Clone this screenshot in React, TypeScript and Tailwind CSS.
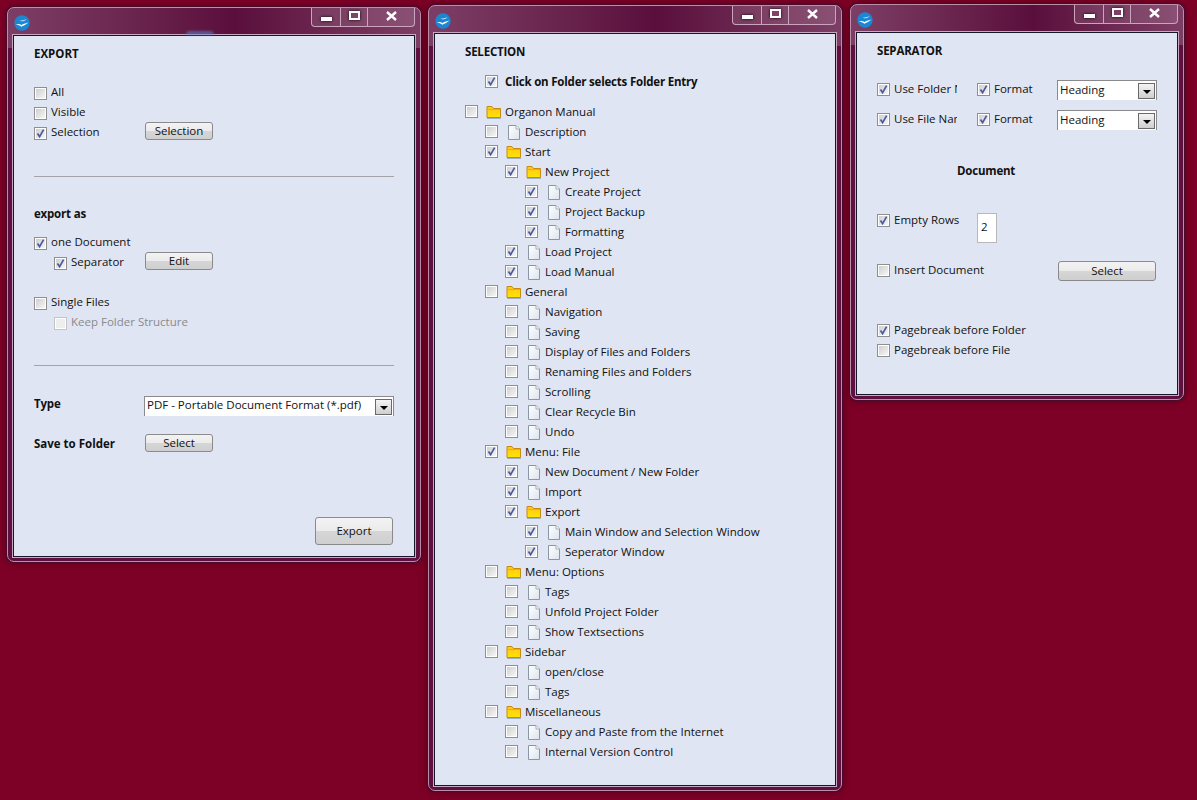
import React from "react";

const FONT = "font-['Open_Sans','Noto_Sans',sans-serif]";

function Check({ on, off, className = "" }: { on?: boolean; off?: boolean; className?: string }) {
  return (
    <span
      className={`relative block h-[13px] w-[13px] shrink-0 border ${
        off ? "border-[#c4c4c8]" : "border-[#8f8f90]"
      } bg-white p-px ${className}`}
    >
      <span
        className={`block h-full w-full ${
          off
            ? "bg-[#eeeeee]"
            : "bg-gradient-to-br from-[#cfcfd2] to-[#f6f6f6]"
        }`}
      />
      {on && (
        <svg className="absolute left-0 top-0" width="11" height="11" viewBox="0 0 11 11">
          <path d="M2.5 5.5 L4.6 8.6 L8.6 1.6" fill="none" stroke="#4a5a9c" strokeWidth="1.7" />
        </svg>
      )}
    </span>
  );
}

function Folder() {
  return (
    <svg width="16" height="14" viewBox="0 0 16 14" className="shrink-0">
      <defs>
        <linearGradient id="fg" x1="0" y1="0" x2="0" y2="1">
          <stop offset="0" stopColor="#ffc520" />
          <stop offset="1" stopColor="#ffe400" />
        </linearGradient>
      </defs>
      <path d="M1 12.5 V1.5 H6 L7.5 3.5 H14.5 V12.5 Z" fill="url(#fg)" stroke="#c98a14" />
      <path d="M1 13.5 H15" stroke="#9fb0c8" />
      <path d="M2 4.5 H14" stroke="#ffa800" />
    </svg>
  );
}

function Doc() {
  return (
    <svg width="16" height="15" viewBox="0 0 16 15" className="shrink-0">
      <defs>
        <linearGradient id="dg" x1="0" y1="0" x2="1" y2="1">
          <stop offset="0" stopColor="#ffffff" />
          <stop offset="1" stopColor="#dde4ee" />
        </linearGradient>
      </defs>
      <path d="M2.5 0.5 H10 L13.5 4 V14.5 H2.5 Z" fill="url(#dg)" stroke="#8a96a6" />
      <path d="M10 0.5 V4 H13.5" fill="#f4f6fa" stroke="#a4aeba" />
    </svg>
  );
}

function Logo() {
  return (
    <svg width="16" height="16" viewBox="0 0 16 16" className="shrink-0">
      <circle cx="8" cy="8" r="7.7" fill="#1b86d2" />
      <path d="M1.5 9.5 C4 8.5 6 9 7.5 10 C10 8.5 12 8.2 14.5 7.5 C12 9.5 10 10.5 7.5 11.8 C6 10.5 4 9.8 1.5 9.5 Z" fill="#ffffff" />
      <path d="M5 5.6 C7.5 5.8 10 5 12.5 4.2 C10.5 6.2 7.5 7 5 5.6 Z" fill="#d8ecfa" />
    </svg>
  );
}

function Caption() {
  return (
    <div className="flex h-[19px] w-[104px] rounded-b-[4px] border border-t-0 border-[#c9a6bc] bg-white/10">
      <div className="flex w-[29px] items-end justify-center border-r border-[#c9a6bc] pb-[5px]">
        <span className="block h-[4px] w-[11px] bg-white shadow-[0_0_3px_#000]" />
      </div>
      <div className="flex w-[27px] items-center justify-center border-r border-[#c9a6bc] pb-[3px]">
        <span className="block h-[9px] w-[11px] border-2 border-white shadow-[0_0_3px_#000]" />
      </div>
      <div className="flex flex-1 items-center justify-center pb-[3px]">
        <svg width="11" height="10" viewBox="0 0 11 10">
          <path d="M1 1 L10 9 M10 1 L1 9" stroke="#ffffff" strokeWidth="2.4" />
        </svg>
      </div>
    </div>
  );
}

function Win({
  x,
  y,
  w,
  h,
  children,
}: {
  x: string;
  y: string;
  w: string;
  h: string;
  children: React.ReactNode;
}) {
  return (
    <section
      className={`absolute ${x} ${y} ${w} ${h} flex flex-col rounded-[7px] border border-[#b98fa9] bg-[#5f0f40] bg-gradient-to-r from-[#7d3e66] via-[#5a0e3c] via-[55%] to-[#7d3e66] bg-[length:100%_40px] bg-no-repeat px-[5px] pb-[4px] shadow-[0_0_0_1px_#4a0a2c,0_0_8px_rgba(0,0,0,0.4)]`}
    >
      <div className="flex h-[27px] shrink-0 items-start justify-between">
        <div className="pl-[1px] pt-[7px]">
          <Logo />
        </div>
        <Caption />
      </div>
      <div className="relative flex-1 border border-[#16162a] bg-[#dfe5f3] text-[11.5px] leading-[20px] text-[#111] shadow-[0_0_0_1px_#c8a9c0]">
        {children}
      </div>
    </section>
  );
}

function Row({
  on,
  off,
  label,
  className = "",
  checkClass = "",
  children,
}: {
  on?: boolean;
  off?: boolean;
  label: string;
  className?: string;
  checkClass?: string;
  children?: React.ReactNode;
}) {
  return (
    <div className={`flex h-[20px] items-center ${className}`}>
      <Check on={on} off={off} className={checkClass} />
      <span className={`ml-[4px] whitespace-nowrap ${off ? "text-[#8a8a8a]" : ""}`}>{label}</span>
      {children}
    </div>
  );
}

function Btn({ label, className = "" }: { label: string; className?: string }) {
  return (
    <button
      className={`flex items-center justify-center rounded-[3px] border border-[#8a8a8a] bg-[linear-gradient(#f3f3f3_0%,#ebebeb_50%,#d6d6d6_50%,#cfcfcf_100%)] text-[11.5px] text-[#111] ${className}`}
    >
      {label}
    </button>
  );
}

function Combo({
  label,
  className = "",
  textClass = "-translate-y-px",
}: {
  label: string;
  className?: string;
  textClass?: string;
}) {
  return (
    <div
      className={`flex h-[20px] items-center justify-between border border-b-0 border-[#8a8a8a] bg-white pl-[2px] pr-[1px] ${className}`}
    >
      <span className={`whitespace-nowrap ${textClass}`}>{label}</span>
      <span className="flex h-[16px] w-[17px] items-center justify-center border border-[#6a6a6a] bg-gradient-to-b from-[#f4f4f4] to-[#cfcfcf]">
        <span className="mt-[3px] block h-0 w-0 border-x-[4px] border-t-[4px] border-x-transparent border-t-black" />
      </span>
    </div>
  );
}

type Node = [number, "f" | "d", boolean, string];

const tree: Node[] = [
  [0, "f", false, "Organon Manual"],
  [1, "d", false, "Description"],
  [1, "f", true, "Start"],
  [2, "f", true, "New Project"],
  [3, "d", true, "Create Project"],
  [3, "d", true, "Project Backup"],
  [3, "d", true, "Formatting"],
  [2, "d", true, "Load Project"],
  [2, "d", true, "Load Manual"],
  [1, "f", false, "General"],
  [2, "d", false, "Navigation"],
  [2, "d", false, "Saving"],
  [2, "d", false, "Display of Files and Folders"],
  [2, "d", false, "Renaming Files and Folders"],
  [2, "d", false, "Scrolling"],
  [2, "d", false, "Clear Recycle Bin"],
  [2, "d", false, "Undo"],
  [1, "f", true, "Menu: File"],
  [2, "d", true, "New Document / New Folder"],
  [2, "d", true, "Import"],
  [2, "f", true, "Export"],
  [3, "d", true, "Main Window and Selection Window"],
  [3, "d", true, "Seperator Window"],
  [1, "f", false, "Menu: Options"],
  [2, "d", false, "Tags"],
  [2, "d", false, "Unfold Project Folder"],
  [2, "d", false, "Show Textsections"],
  [1, "f", false, "Sidebar"],
  [2, "d", false, "open/close"],
  [2, "d", false, "Tags"],
  [1, "f", false, "Miscellaneous"],
  [2, "d", false, "Copy and Paste from the Internet"],
  [2, "d", false, "Internal Version Control"],
];

const indents = ["ml-0", "ml-[20px]", "ml-[40px]", "ml-[60px]"];
const bold = "font-bold tracking-[-0.2px]";
const down = "translate-y-px";

export default function App() {
  return (
    <div className={`relative h-[800px] w-[1197px] overflow-hidden bg-[#7d0026] ${FONT}`}>
      {/* Export */}
      <Win x="left-[7px]" y="top-[7px]" w="w-[414px]" h="h-[555px]">
        <div className="flex flex-col pl-[20px] pt-[8px]">
          <div className="h-[20px] font-bold">EXPORT</div>
          <div className="mt-[18px]" />
          <Row label="All" checkClass={down} />
          <Row label="Visible" checkClass={down} />
          <Row on label="Selection" checkClass={down} className="w-[179px]">
            <Btn label="Selection" className="ml-auto h-[18px] w-[68px] -translate-y-px" />
          </Row>
          <div className="mt-[34px] h-px w-[360px] bg-[#a3a3a8]" />
          <div className={`mt-[27px] h-[20px] ${bold}`}>export as</div>
          <div className="mt-[8px]" />
          <Row on label="one Document" checkClass={down} />
          <Row on label="Separator" checkClass={down} className="ml-[20px] w-[159px]">
            <Btn label="Edit" className="ml-auto h-[18px] w-[68px] -translate-y-px" />
          </Row>
          <Row label="Single Files" checkClass={down} className="mt-[20px]" />
          <Row off label="Keep Folder Structure" checkClass={down} className="ml-[20px]" />
          <div className="mt-[33px] h-px w-[360px] bg-[#a3a3a8]" />
          <div className="mt-[30px] flex h-[20px] items-center">
            <span className={`w-[110px] -translate-y-[2px] ${bold}`}>Type</span>
            <Combo
              label="PDF - Portable Document Format (*.pdf)"
              className="w-[250px]"
              textClass="-translate-y-[2px]"
            />
          </div>
          <div className="mt-[18px] flex h-[20px] items-center">
            <span className="w-[111px] font-bold">Save to Folder</span>
            <Btn label="Select" className="h-[18px] w-[68px] -translate-y-px" />
          </div>
          <Btn label="Export" className="ml-[281px] mt-[63px] h-[28px] w-[78px]" />
        </div>
        <span className="absolute left-[172px] top-[-5px] h-[4px] w-[28px] rounded-t-full bg-[#5f7fc8]/60 blur-[1px]" />
      </Win>

      {/* Selection */}
      <Win x="left-[428px]" y="top-[5px]" w="w-[414px]" h="h-[786px]">
        <div className="flex flex-col pl-[30px] pt-[8px]">
          <div className={`h-[20px] ${bold}`}>SELECTION</div>
          <div className={`ml-[20px] mt-[10px] flex h-[20px] items-center ${bold}`}>
            <Check on className="-translate-y-px" />
            <span className="ml-[7px] whitespace-nowrap">Click on Folder selects Folder Entry</span>
          </div>
          <div className="mt-[10px]" />
          {tree.map(([lvl, kind, on, label], i) => (
            <div key={i} className={`flex h-[20px] items-center ${indents[lvl]}`}>
              <Check on={on} className="-translate-y-px" />
              <span className="ml-[8px] flex w-[16px] items-center">
                {kind === "f" ? <Folder /> : <Doc />}
              </span>
              <span className="ml-[3px] whitespace-nowrap">{label}</span>
            </div>
          ))}
        </div>
      </Win>

      {/* Separator */}
      <Win x="left-[850px]" y="top-[4px]" w="w-[334px]" h="h-[396px]">
        <div className="flex flex-col pl-[20px] pt-[8px]">
          <div className={`h-[20px] ${bold}`}>SEPARATOR</div>
          <div className="mt-[19px] flex h-[20px] items-center">
            <Check on className="-translate-y-px" />
            <span className="ml-[4px] w-[63px] -translate-y-px overflow-hidden whitespace-nowrap">Use Folder Name</span>
            <span className="w-[20px]" />
            <Check on className="-translate-y-px" />
            <span className="ml-[4px] w-[63px] -translate-y-px">Format</span>
            <Combo label="Heading" className="w-[100px]" />
          </div>
          <div className="mt-[10px] flex h-[20px] items-center">
            <Check on className="-translate-y-px" />
            <span className="ml-[4px] w-[63px] -translate-y-px overflow-hidden whitespace-nowrap">Use File Name</span>
            <span className="w-[20px]" />
            <Check on className="-translate-y-px" />
            <span className="ml-[4px] w-[63px] -translate-y-px">Format</span>
            <Combo label="Heading" className="w-[100px]" />
          </div>
          <div className={`ml-[80px] mt-[31px] h-[20px] ${bold}`}>Document</div>
          <div className="mt-[29px] flex h-[20px] items-start">
            <div className="flex h-[20px] w-[100px] items-center">
              <Check on />
              <span className="ml-[4px]">Empty Rows</span>
            </div>
            <div className="mt-[3px] flex h-[30px] w-[20px] items-center border border-[#b9b9bd] bg-white pb-[2px] pl-[3px]">2</div>
          </div>
          <div className="mt-[30px] flex h-[20px] items-center">
            <div className="flex w-[181px] items-center">
              <Check />
              <span className="ml-[4px]">Insert Document</span>
            </div>
            <Btn label="Select" className="mt-[1px] h-[20px] w-[98px]" />
          </div>
          <Row on label="Pagebreak before Folder" className="mt-[40px]" />
          <Row label="Pagebreak before File" />
        </div>
      </Win>
    </div>
  );
}
